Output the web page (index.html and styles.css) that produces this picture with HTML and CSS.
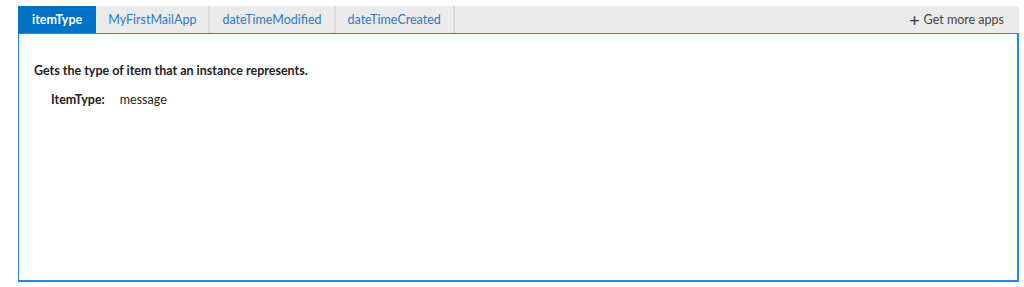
FILE: index.html
```html
<!DOCTYPE html>
<html lang="en">
<head>
    <meta charset="UTF-8">
    <title>itemType</title>
    <link rel="stylesheet" href="styles.css">
</head>
<body>
    <div class="app">
        <div class="tabs">
            <a class="tab active">itemType</a>
            <a class="tab">MyFirstMailApp</a>
            <a class="tab">dateTimeModified</a>
            <a class="tab">dateTimeCreated</a>
            <a class="more"><span class="plus">+</span> Get more apps</a>
        </div>
        <div class="panel">
            <p class="desc">Gets the type of item that an instance represents.</p>
            <div class="prop">
                <span class="name">ItemType:</span>
                <span class="value">message</span>
            </div>
        </div>
    </div>
</body>
</html>
```

FILE: styles.css
```css
body {
    margin: 0;
    padding: 6px 5px 6px 18px;
    font-family: "Lato", "Open Sans", sans-serif;
    font-size: 12.5px;
    color: #222;
    background: #fff;
}
.app {
    width: 1001px;
}
.tabs {
    display: flex;
    height: 27px;
    background: #ebebeb;
}
.tab {
    display: flex;
    align-items: center;
    padding: 0 12px;
    color: #2b79c2;
    border-right: 2px solid #d8d8d8;
}
.tab.active {
    background: #0072c6;
    color: #fff;
    font-weight: bold;
    padding: 0 14px;
    border-right: none;
}
.more {
    margin-left: auto;
    display: flex;
    align-items: center;
    padding-right: 15px;
    color: #444;
}
.plus {
    font-size: 18px;
    margin-right: 4px;
    color: #333;
}
.panel {
    height: 246px;
    border: 1px solid #2b88d8;
    border-width: 1px 2px 2px 1px;
    padding: 0 15px;
}
.desc {
    margin: 29px 0 0;
    font-weight: bold;
}
.prop {
    margin: 14px 0 0 17px;
    display: flex;
    gap: 15px;
}
.name {
    font-weight: bold;
}
```
